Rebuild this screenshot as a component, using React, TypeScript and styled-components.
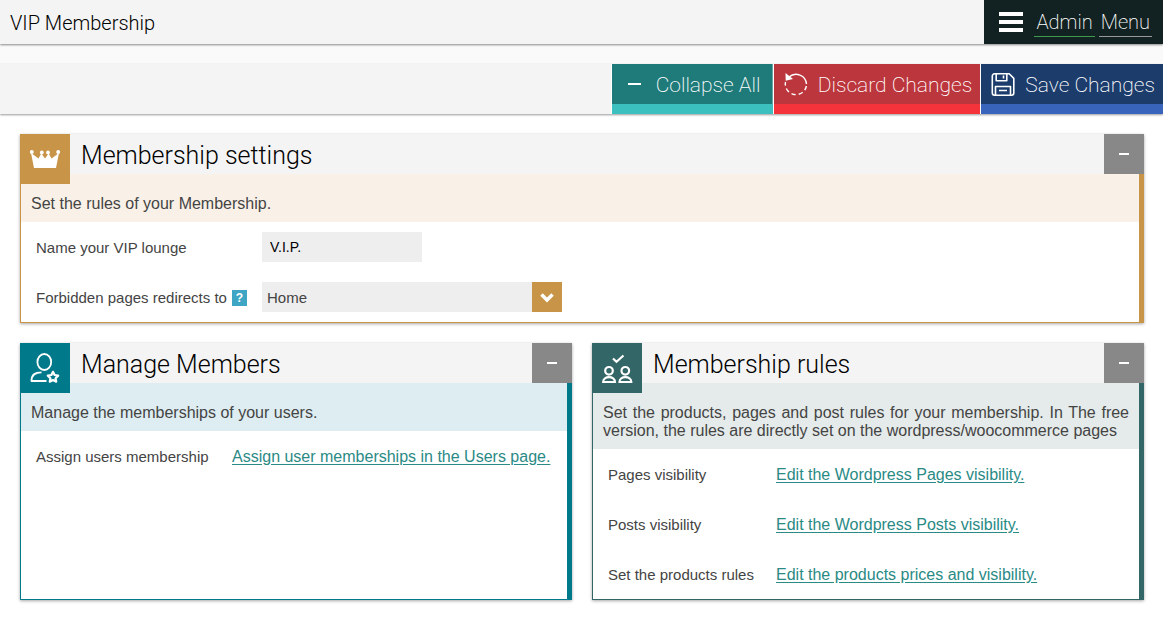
import React from "react";
import styled, { createGlobalStyle } from "styled-components";

const GlobalStyle = createGlobalStyle`
  * { box-sizing: border-box; }
  body { margin: 0; background: #ffffff; color: #444444; font: 16px/18px "Liberation Sans", Arial, sans-serif; }
  h1, h2, p { margin: 0; font-weight: 300; }
  button { border: 0; margin: 0; cursor: pointer; }
`;

const heading = `font-family: Roboto, "Liberation Sans", sans-serif; font-weight: 300;`;
const action = `font-family: Roboto, "Liberation Sans", sans-serif; font-weight: 200;`;

const TopBar = styled.header`
  position: relative;
  display: flex;
  justify-content: space-between;
  height: 44px;
  background: #f4f4f4;
  box-shadow: 0 1px 2px rgba(0, 0, 0, 0.45);
`;
const PageTitle = styled.h1`
  ${heading}
  padding-left: 10px;
  font-size: 20px;
  line-height: 46px;
  color: #000000;
`;
const MenuButton = styled.button`
  ${action}
  display: flex;
  align-items: center;
  gap: 11px;
  padding: 0 11px 0 15px;
  background: #122222;
  color: #ffffff;
  font-size: 20px;
`;
const MenuWords = styled.span`
  display: flex;
  gap: 4px;
`;
const MenuWord = styled.span<{ $line: string }>`
  padding: 0 2px;
  line-height: 28px;
  border-bottom: 1px solid ${(p) => p.$line};
`;
const ToolBand = styled.div`
  padding-top: 20px;
  background: #fafafa;
`;
const ToolBar = styled.div`
  display: flex;
  justify-content: flex-end;
  gap: 1px;
  height: 50px;
  background: #f4f4f4;
  box-shadow: 0 1px 2px rgba(0, 0, 0, 0.4);
`;
const ToolButton = styled.button<{ $bg: string; $edge: string }>`
  ${action}
  display: flex;
  align-items: center;
  gap: 10px;
  min-width: 161px;
  padding: 1px 8px 0 10px;
  background: ${(p) => p.$bg};
  border-bottom: 10px solid ${(p) => p.$edge};
  box-shadow: 0 0 0 1px #ffffff;
  color: #ffffff;
  font-size: 21px;
  clip-path: inset(0 0 0 -1px);
`;
const Panels = styled.main`
  display: grid;
  grid-template-columns: 1fr 1fr;
  gap: 20px;
  padding: 20px 19px 17px 20px;
`;
const Panel = styled.section<{ $wide?: boolean }>`
  display: flex;
  flex-direction: column;
  grid-column: ${(p) => (p.$wide ? "1 / -1" : "auto")};
  background: #ffffff;
  box-shadow: 0 1px 3px rgba(0, 0, 0, 0.35);
`;
const PanelHead = styled.div`
  display: flex;
  height: 40px;
  background: #f4f4f4;
`;
const PanelIcon = styled.div<{ $color: string }>`
  z-index: 1;
  flex: none;
  width: 50px;
  height: 50px;
  background: ${(p) => p.$color};
`;
const PanelTitle = styled.h2`
  ${heading}
  flex: 1;
  padding-left: 11px;
  font-size: 25px;
  line-height: 44px;
  color: #000000;
`;
const CollapseButton = styled.button`
  display: flex;
  align-items: center;
  justify-content: center;
  width: 40px;
  padding: 0;
  background: #888888;
`;
const Dash = styled.span`
  width: 10px;
  height: 2px;
  background: #ffffff;
`;
const PanelBody = styled.div<{ $color: string }>`
  flex: 1;
  border: solid ${(p) => p.$color};
  border-width: 0 5px 1px 1px;
`;
const Intro = styled.p<{ $tint: string }>`
  padding: 21px 10px 9px;
  background: ${(p) => p.$tint};
  font-weight: 400;
  text-align: justify;
`;
const Row = styled.div<{ $label: number }>`
  display: grid;
  grid-template-columns: ${(p) => p.$label}px 1fr;
  align-items: center;
  height: 50px;
  padding: 0 15px;
`;
const LabelCell = styled.div`
  display: flex;
  align-items: center;
  justify-content: space-between;
  padding: 2px 15px 0 0;
  font-size: 15px;
  white-space: nowrap;
`;
const LinkCell = styled.div`
  padding-top: 2px;
`;
const Help = styled.button`
  width: 15px;
  height: 16px;
  padding: 0;
  background: #3ea5c4;
  color: #ffffff;
  font: bold 12px/16px "Liberation Sans", Arial, sans-serif;
`;
const TextBox = styled.input`
  width: 160px;
  height: 30px;
  padding: 0 8px;
  border: 0;
  background: #eeeeee;
  color: #000000;
  font: 14px "Liberation Sans", Arial, sans-serif;
`;
const SelectWrap = styled.div`
  position: relative;
  width: 300px;
  height: 30px;
`;
const Select = styled.select`
  width: 100%;
  height: 100%;
  padding: 0 35px 0 5px;
  appearance: none;
  border: 0;
  border-radius: 0;
  background: #eeeeee;
  color: #444444;
  font: 15px "Liberation Sans", Arial, sans-serif;
`;
const SelectArrow = styled.span`
  position: absolute;
  top: 0;
  right: 0;
  width: 30px;
  height: 30px;
  background: #c79448;
  pointer-events: none;
`;
const Link = styled.a`
  color: #2a8a85;
  white-space: nowrap;
  text-underline-offset: 2px;
`;

const MenuIcon = () => (
  <svg width="24" height="20" fill="#fff" aria-hidden="true">
    <path d="M0 0h24v4H0zM0 8h24v4H0zM0 16h24v4H0z" />
  </svg>
);
const MinusIcon = () => (
  <svg width="24" height="24" fill="#fff" aria-hidden="true">
    <path d="M6 10h13v2H6z" />
  </svg>
);
const UndoIcon = () => (
  <svg width="24" height="24" fill="none" stroke="#fff" strokeWidth="1.4" aria-hidden="true">
    <path d="M5 4A10.500 10.500 0 0 1 22.500 11" />
    <path d="M22.400 13A10.500 10.500 0 0 1 1.500 9" strokeDasharray="4.4 3" />
    <path d="M1.500 0l.2 7.700 7.300-1.700z" fill="#fff" stroke="none" />
  </svg>
);
const SaveIcon = () => (
  <svg width="24" height="24" viewBox="0 1 24 24" fill="none" stroke="#fff" strokeWidth="1.600" strokeLinejoin="round" aria-hidden="true">
    <path d="M3.500 1.800h14.700l4.600 4.600v14.700a2.200 2.200 0 0 1-2.200 2.200H3.500a2.200 2.200 0 0 1-2.200-2.200V4a2.200 2.200 0 0 1 2.200-2.200z" />
    <path d="M5.200 2v6.700h10.600v-6.700M12.500 3.500v3M4.500 23v-8.500h15v8.500M8 18.500h8" />
  </svg>
);
const CrownIcon = () => (
  <svg width="50" height="50" fill="#fff" aria-hidden="true">
    <path d="M14 34l-3-15 7.500 5.500 2.800-5 3.700 5 3.700-5 2.800 5 7.500-5.500L36 34z" />
    <circle cx="11.800" cy="18" r="2" />
    <circle cx="21.800" cy="18.500" r="1.900" />
    <circle cx="28" cy="18.500" r="1.900" />
    <circle cx="38.200" cy="18" r="2" />
  </svg>
);
const MemberIcon = () => (
  <svg width="50" height="50" fill="none" stroke="#fff" strokeWidth="1.800" strokeLinejoin="round" aria-hidden="true">
    <ellipse cx="24.300" cy="19" rx="6.900" ry="8" />
    <path d="M26.500 38H11.500c0-6.500 3.500-8.700 10-8.700" />
    <path d="M33 28.800l1.600 3.200 3.600.6-2.600 2.600.6 3.500-3.200-1.600-3.200 1.600.6-3.500-2.600-2.600 3.600-.6z" strokeWidth="2.200" />
  </svg>
);
const RulesIcon = () => (
  <svg width="50" height="50" fill="none" stroke="#fff" strokeWidth="2.200" aria-hidden="true">
    <path d="M21 15.500l3.500 3.300 7-6.300" />
    <circle cx="17" cy="27.800" r="3.800" />
    <circle cx="33.300" cy="27.800" r="3.800" />
    <path d="M11.200 39c0-6.500 11.800-6.500 11.800 0zM27.500 39c0-6.500 11.800-6.500 11.800 0z" />
  </svg>
);

type PanelBoxProps = {
  title: string;
  color: string;
  tint: string;
  intro: string;
  icon: React.ReactNode;
  wide?: boolean;
  children: React.ReactNode;
};

const PanelBox = ({ title, color, tint, intro, icon, wide, children }: PanelBoxProps) => (
  <Panel $wide={wide}>
    <PanelHead>
      <PanelIcon $color={color}>{icon}</PanelIcon>
      <PanelTitle>{title}</PanelTitle>
      <CollapseButton type="button" aria-label={`Collapse ${title}`}>
        <Dash />
      </CollapseButton>
    </PanelHead>
    <PanelBody $color={color}>
      <Intro $tint={tint}>{intro}</Intro>
      {children}
    </PanelBody>
  </Panel>
);

const rules = [
  ["Pages visibility", "Edit the Wordpress Pages visibility."],
  ["Posts visibility", "Edit the Wordpress Posts visibility."],
  ["Set the products rules", "Edit the products prices and visibility."],
];

export default function App() {
  return (
    <>
      <GlobalStyle />
      <TopBar>
        <PageTitle>VIP Membership</PageTitle>
        <MenuButton type="button">
          <MenuIcon />
          <MenuWords>
            <MenuWord $line="#3f9a4c">Admin</MenuWord>
            <MenuWord $line="#999999">Menu</MenuWord>
          </MenuWords>
        </MenuButton>
      </TopBar>
      <ToolBand>
        <ToolBar>
          <ToolButton type="button" $bg="#1f7a7a" $edge="#3bbfbf"><MinusIcon />Collapse All</ToolButton>
          <ToolButton type="button" $bg="#bc363d" $edge="#f5333a"><UndoIcon />Discard Changes</ToolButton>
          <ToolButton type="button" $bg="#1c3c6c" $edge="#3865bb"><SaveIcon />Save Changes</ToolButton>
        </ToolBar>
      </ToolBand>
      <Panels>
        <PanelBox wide title="Membership settings" color="#c79448" tint="#f9f1e7" intro="Set the rules of your Membership." icon={<CrownIcon />}>
          <Row $label={226}>
            <LabelCell><label htmlFor="lounge">Name your VIP lounge</label></LabelCell>
            <TextBox id="lounge" defaultValue="V.I.P." />
          </Row>
          <Row $label={226}>
            <LabelCell>
              <label htmlFor="redirect">Forbidden pages redirects to</label>
              <Help type="button">?</Help>
            </LabelCell>
            <SelectWrap>
              <Select id="redirect"><option>Home</option></Select>
              <SelectArrow>
                <svg width="30" height="30" fill="none" stroke="#fff" strokeWidth="3.500" aria-hidden="true">
                  <path d="M9.500 12.500l5.500 5.500 5.500-5.500" />
                </svg>
              </SelectArrow>
            </SelectWrap>
          </Row>
        </PanelBox>
        <PanelBox title="Manage Members" color="#007a8a" tint="#deedf1" intro="Manage the memberships of your users." icon={<MemberIcon />}>
          <Row $label={196}>
            <LabelCell>Assign users membership</LabelCell>
            <LinkCell><Link href="#users">Assign user memberships in the Users page.</Link></LinkCell>
          </Row>
        </PanelBox>
        <PanelBox title="Membership rules" color="#336666" tint="#e4ebea" intro="Set the products, pages and post rules for your membership. In The free version, the rules are directly set on the wordpress/woocommerce pages" icon={<RulesIcon />}>
          {rules.map(([label, link]) => (
            <Row $label={168} key={label}>
              <LabelCell>{label}</LabelCell>
              <LinkCell><Link href="#rules">{link}</Link></LinkCell>
            </Row>
          ))}
        </PanelBox>
      </Panels>
    </>
  );
}
